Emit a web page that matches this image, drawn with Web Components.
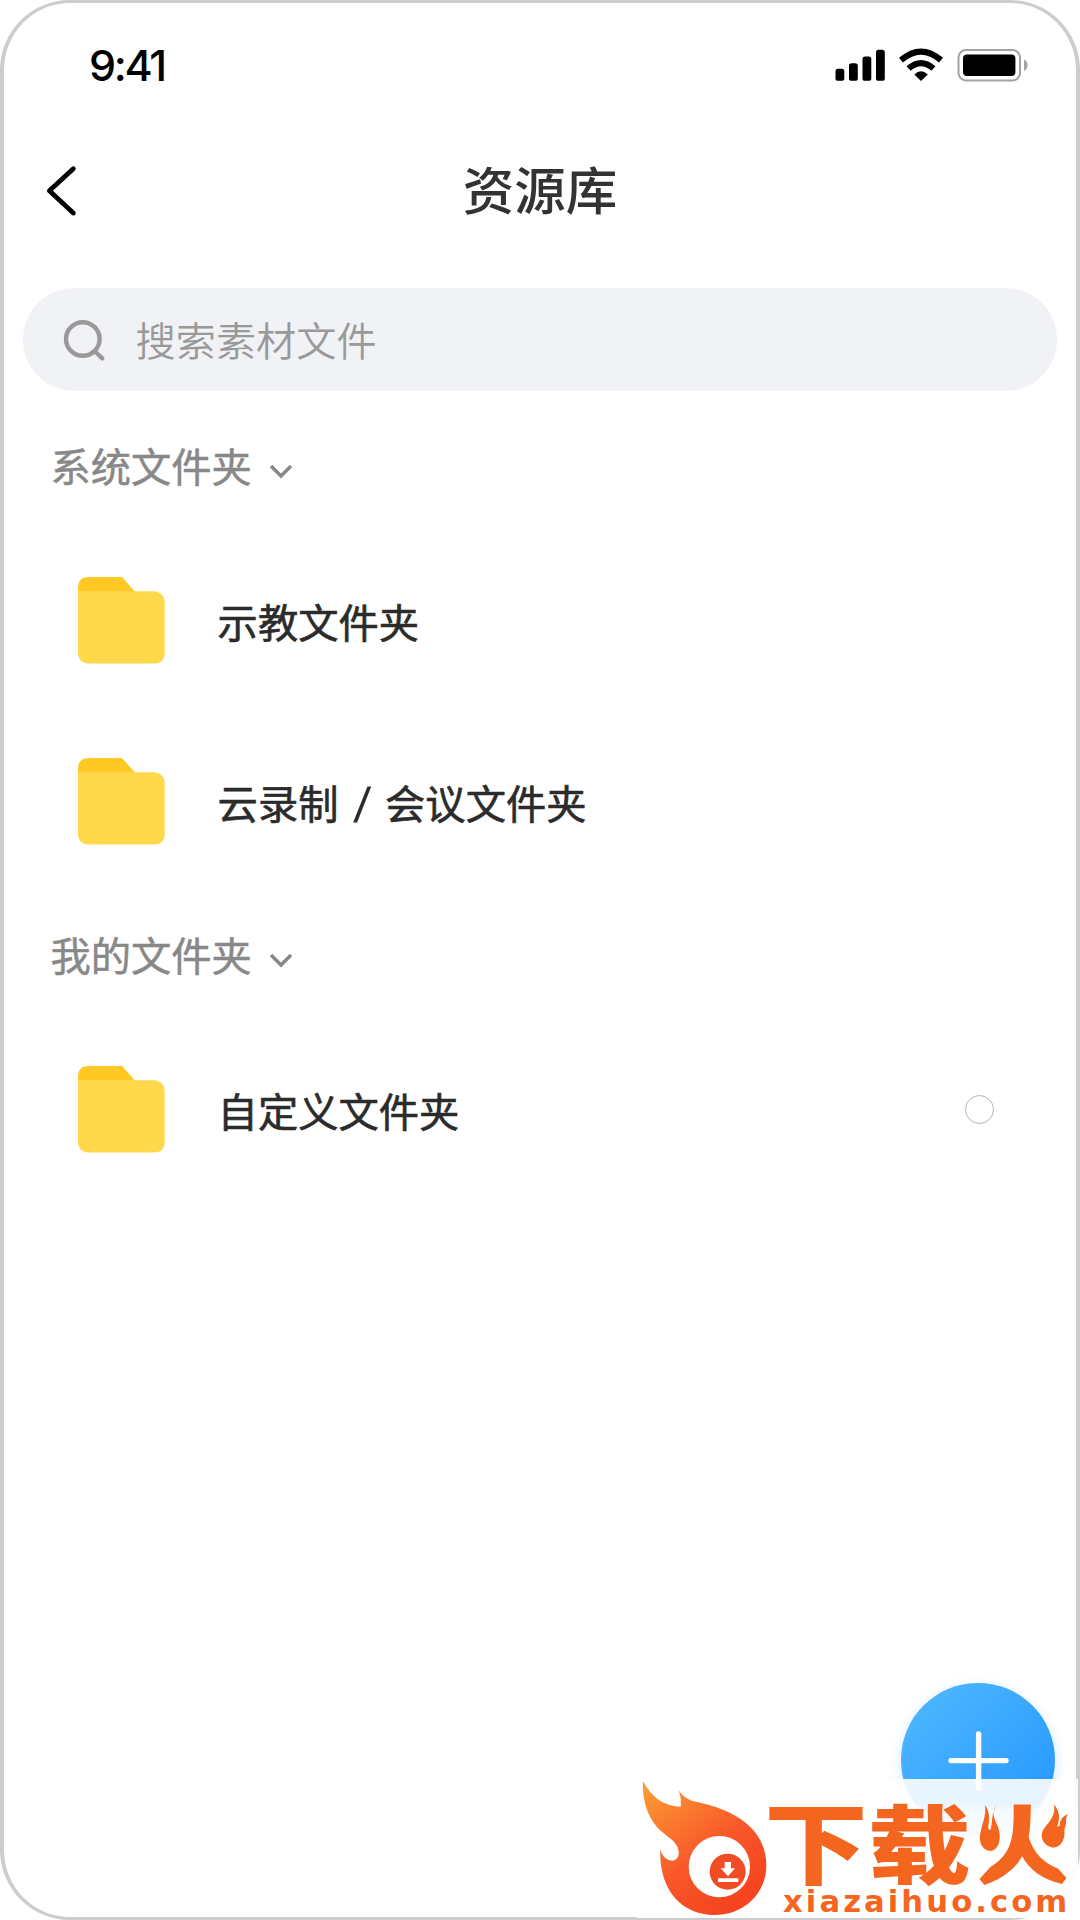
<!DOCTYPE html>
<html lang="zh-CN">
<head>
<meta charset="UTF-8">
<title>资源库</title>
<style>
  body {
    margin: 0;
    background: #fff;
    font-family: "Noto Sans CJK SC", sans-serif;
  }
  .slash {
    display: inline-block;
    width: 28.5px;
    font: 400 49px/30px "Liberation Sans", sans-serif;
    text-align: center;
    -webkit-text-stroke: 0;
    transform: translateY(3px) skewX(-7deg);
  }
</style>
</head>
<body>
<phone-screen>
  <status-bar>9:41</status-bar>
  <nav-bar>资源库</nav-bar>
  <search-field>搜索素材文件</search-field>
  <folder-section label="系统文件夹">
    <folder-item>示教文件夹</folder-item>
    <folder-item>云录制 <span class="slash">/</span> 会议文件夹</folder-item>
  </folder-section>
  <folder-section label="我的文件夹">
    <folder-item selectable>自定义文件夹</folder-item>
  </folder-section>
  <add-button slot="overlay"></add-button>
  <site-mark slot="overlay"></site-mark>
</phone-screen>

<script>
class PhoneScreen extends HTMLElement {
  constructor() {
    super();
    this.attachShadow({ mode: 'open' }).innerHTML = `
      <style>
        :host {
          display: block;
          position: relative;
          box-sizing: border-box;
          width: 1080px;
          height: 1920px;
          overflow: hidden;
        }
        .frame {
          display: flex;
          flex-direction: column;
          box-sizing: border-box;
          height: 1920px;
          border: 4px solid #cdcdcd;
          border-top-width: 3px;
          border-bottom-width: 3px;
          border-radius: 70px;
        }
      </style>
      <div class="frame"><slot></slot></div>
      <slot name="overlay"></slot>
    `;
  }
}

class StatusBar extends HTMLElement {
  constructor() {
    super();
    this.attachShadow({ mode: 'open' }).innerHTML = `
      <style>
        :host {
          display: flex;
          align-items: center;
          justify-content: space-between;
          height: 124px;
          padding: 0 48px 0 85px;
          color: #000;
          font: 500 43px/1 Inter, "Liberation Sans", sans-serif;
          letter-spacing: -2.3px;
        }
        span { margin-top: 1px; }
        svg { display: block; }
      </style>
      <span><slot></slot></span>
      <svg width="193" height="34" viewBox="835 47.5 193 34">
        <rect x="835.5" y="68.3" width="8.8" height="12" rx="2.6"/>
        <rect x="849" y="62.7" width="8.8" height="17.6" rx="2.6"/>
        <rect x="862.5" y="56" width="8.8" height="24.3" rx="2.6"/>
        <rect x="876" y="49.3" width="8.8" height="31" rx="2.6"/>
        <g fill="none" stroke="#000">
          <path d="M901 59.7 Q921 42.5 941 59.7" stroke-width="6.2"/>
          <path d="M908.6 68 Q921 57.2 933.4 68" stroke-width="6.2"/>
        </g>
        <path d="M914.4 74 Q921 67.5 927.8 74 L921 80.4Z"/>
        <rect x="958.5" y="49.5" width="61.5" height="30.5" rx="7.5" fill="none" stroke="#a3a3a3" stroke-width="2"/>
        <rect x="963" y="54" width="52.4" height="21.5" rx="4"/>
        <path d="M1024 59 Q1027.6 60.8 1027.6 64.7 Q1027.6 68.6 1024 70.4Z" fill="#a3a3a3"/>
      </svg>
    `;
  }
}

class NavBar extends HTMLElement {
  constructor() {
    super();
    this.attachShadow({ mode: 'open' }).innerHTML = `
      <style>
        :host {
          display: grid;
          grid-template-columns: 60px 1fr 60px;
          align-items: center;
          height: 127px;
          padding: 0 39px;
          color: #333;
          font-size: 51.5px;
          font-weight: 500;
          line-height: 1;
          text-align: center;
        }
        svg { display: block; }
        span { margin-bottom: 5px; }
      </style>
      <svg width="36" height="54" viewBox="43 164 36 54" fill="none" stroke="#000" stroke-width="4.8" stroke-linecap="round" stroke-linejoin="round">
        <path d="M73.3 168.7 L49.4 190.8 L73.3 213"/>
      </svg>
      <span><slot></slot></span>
    `;
  }
}

class SearchField extends HTMLElement {
  constructor() {
    super();
    this.attachShadow({ mode: 'open' }).innerHTML = `
      <style>
        :host {
          display: flex;
          align-items: center;
          gap: 29px;
          box-sizing: border-box;
          height: 103px;
          margin: 34px 19px 12px 19px;
          padding-left: 37.5px;
          border-radius: 52px;
          background: #f1f2f6;
          color: #999;
          font-size: 40.2px;
          font-weight: 350;
          line-height: 1;
        }
      </style>
      <svg width="46" height="46" viewBox="61 317 46 46" fill="none" stroke="#999" stroke-width="4.4" stroke-linecap="round">
        <circle cx="82.8" cy="339" r="16.8"/>
        <path d="M95 351.5 L102.3 358.3"/>
      </svg>
      <span><slot></slot></span>
    `;
  }
}

class FolderSection extends HTMLElement {
  constructor() {
    super();
    this.attachShadow({ mode: 'open' });
  }

  connectedCallback() {
    this.shadowRoot.innerHTML = `
      <style>
        :host { display: block; }
        .head {
          display: flex;
          align-items: center;
          gap: 17px;
          height: 127px;
          padding-left: 46.4px;
          color: #888;
          font-size: 40.3px;
          font-weight: 400;
          line-height: 1;
          -webkit-text-stroke: .5px;
        }
        span { margin-bottom: 2px; }
        svg { margin-top: 9px; }
      </style>
      <div class="head">
        <span>${this.getAttribute('label')}</span>
        <svg width="24" height="16" viewBox="0 0 24 16" fill="none" stroke="#888" stroke-width="3.4">
          <path d="M2 3 L12 13 L22 3"/>
        </svg>
      </div>
      <slot></slot>
    `;
  }
}

class FolderItem extends HTMLElement {
  constructor() {
    super();
    this.attachShadow({ mode: 'open' }).innerHTML = `
      <style>
        :host {
          display: flex;
          align-items: center;
          height: 181px;
          padding: 0 82px 0 73.6px;
          color: #2b2b2b;
          font-size: 40.3px;
          font-weight: 400;
          line-height: 1;
          -webkit-text-stroke: .6px;
        }
        .name { flex: 1; margin: 2px 0 0 53px; }
        .check {
          display: none;
          box-sizing: border-box;
          width: 29px;
          height: 29px;
          border: 1.6px solid #b4b4b4;
          border-radius: 50%;
        }
        :host([selectable]) .check { display: block; }
      </style>
      <svg width="87" height="87" viewBox="0 0 87 87">
        <path d="M0 20 V11 Q0 0 11 0 H44 L60 18 V20Z" fill="#ffc825"/>
        <path d="M0 14.3 H75 Q86.7 15 86.7 26 V77 Q86 86 77 86.6 H10 Q1 86 0 77Z" fill="#ffd84c"/>
      </svg>
      <span class="name"><slot></slot></span>
      <span class="check"></span>
    `;
  }
}

// floating action button, bottom right
class AddButton extends HTMLElement {
  constructor() {
    super();
    this.attachShadow({ mode: 'open' }).innerHTML = `
      <style>
        :host {
          position: absolute;
          left: 901px;
          top: 1683px;
          display: grid;
          place-items: center;
          width: 153.5px;
          height: 153.5px;
          border-radius: 50%;
          background: linear-gradient(135deg, #4db6ff 10%, #2698ff 90%);
          box-shadow: 0 4px 14px rgba(64, 165, 255, .22);
        }
      </style>
      <svg width="64" height="64" viewBox="0 0 64 64" stroke="#fff" stroke-width="5.4" stroke-linecap="round">
        <path d="M32.6 6 V60 M5 32.6 H60"/>
      </svg>
    `;
  }
}

class SiteMark extends HTMLElement {
  constructor() {
    super();
    this.attachShadow({ mode: 'open' }).innerHTML = `
      <style>
        :host {
          position: absolute;
          left: 637px;
          top: 1779px;
          width: 441px;
          height: 139px;
          background: linear-gradient(rgba(255, 255, 255, .89) 24px, rgba(255, 255, 255, .96) 34px);
        }
        svg { display: block; overflow: visible; }
        .cn { font: 900 100px "Noto Sans CJK SC", sans-serif; }
        .url { font: 700 90px "DejaVu Sans", sans-serif; letter-spacing: 9px; }
      </style>
      <svg width="441" height="139" viewBox="51 357 1323 417" fill="#f4651f">
        <defs>
          <linearGradient id="fire" x1="70" y1="390" x2="330" y2="740" gradientUnits="userSpaceOnUse">
            <stop offset="0" stop-color="#fb9a32"/>
            <stop offset=".6" stop-color="#f9572a"/>
            <stop offset="1" stop-color="#f5441f"/>
          </linearGradient>
          <clipPath id="person">
            <path d="M1166 420 H1256 V560 L1380 700 H1040 L1166 560Z"/>
          </clipPath>
        </defs>
        <path fill="url(#fire)" d="M69 364 C95 412 132 440 182 440 C184 422 182 405 175 389 C190 412 207 421 235 427 C350 452 439 510 439 616 C439 700 372 765 285 765 C180 765 116 685 121 568 C127 592 142 602 158 602 C178 600 180 577 171 558 C155 530 125 525 100 487 C75 450 67 405 69 364Z"/>
        <circle cx="298" cy="620" r="92" fill="#fff"/>
        <circle cx="323" cy="635" r="54" fill="#f04c25"/>
        <path fill="#fff" d="M314 606 H333 V625 H345 L324 649 L302 625 H314Z M294 655 H355 V666 H294Z"/>
        <text class="cn" transform="translate(433 650) scale(3.1 2.65)">下</text>
        <text class="cn" transform="translate(744 650) scale(3.08 2.55)">载</text>
        <g clip-path="url(#person)">
          <text class="cn" transform="translate(1053 652) scale(3.1 2.55)">火</text>
        </g>
        <path d="M1131 433 C1112 455 1122 475 1134 500 C1146 535 1137 570 1111 573 C1082 570 1074 540 1083 510 C1088 488 1099 465 1095 436 C1108 452 1110 475 1104 505 L1111 511 C1119 490 1112 460 1131 433Z"/>
        <path d="M1302 433 C1320 455 1320 475 1312 500 L1319 497 C1320 482 1326 468 1345 463 C1333 475 1342 485 1336 500 C1330 510 1337 520 1331 535 C1327 552 1315 562 1300 563 C1272 557 1260 536 1267 515 C1277 493 1309 475 1302 433Z"/>
        <text class="url" x="489" y="755" textLength="862" lengthAdjust="spacingAndGlyphs">xiazaihuo.com</text>
      </svg>
    `;
  }
}

customElements.define('phone-screen', PhoneScreen);
customElements.define('status-bar', StatusBar);
customElements.define('nav-bar', NavBar);
customElements.define('search-field', SearchField);
customElements.define('folder-section', FolderSection);
customElements.define('folder-item', FolderItem);
customElements.define('add-button', AddButton);
customElements.define('site-mark', SiteMark);
</script>
</body>
</html>
